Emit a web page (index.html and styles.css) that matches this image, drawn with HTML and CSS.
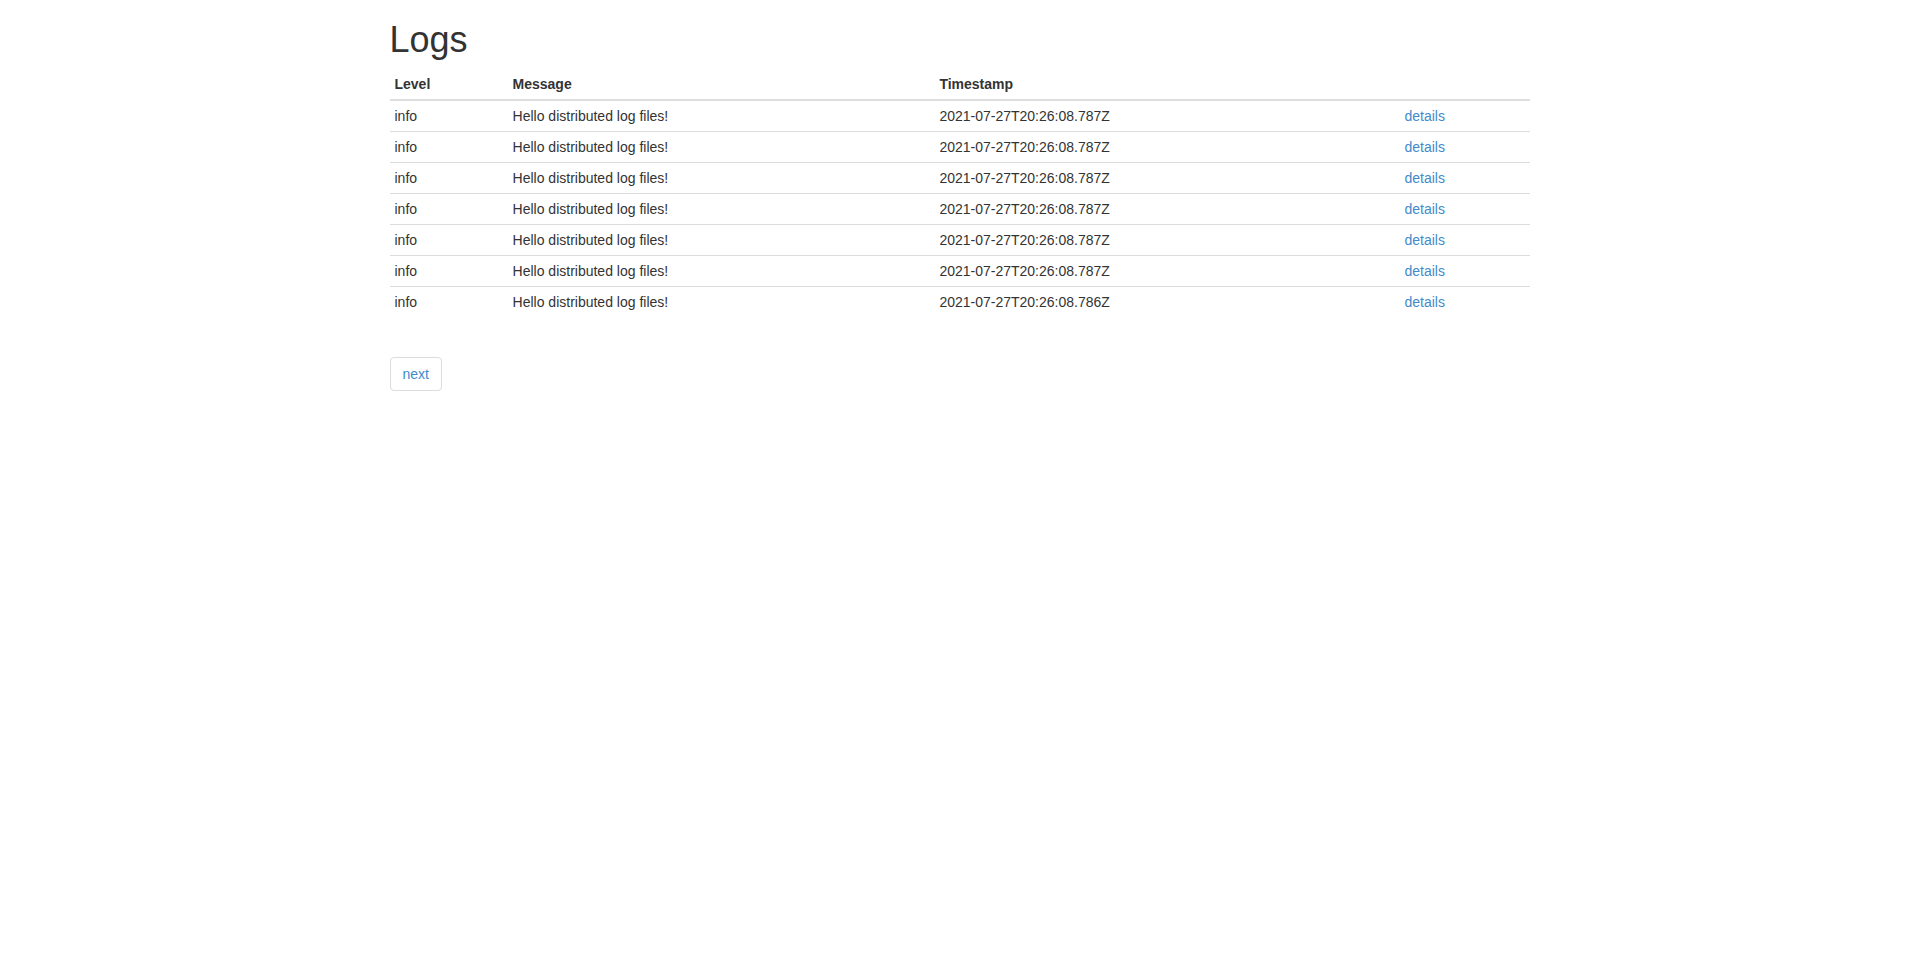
FILE: index.html
```html
<!DOCTYPE html>
<html>
<head>
<meta charset="utf-8">
<title>Logs</title>
<link rel="stylesheet" href="styles.css">
</head>
<body>
<div class="container">
  <h1 class="title">Logs</h1>
  <table class="table">
    <thead>
      <tr><th>Level</th><th>Message</th><th>Timestamp</th><th></th></tr>
    </thead>
    <tbody>
      <tr><td>info</td><td>Hello distributed log files!</td><td>2021-07-27T20:26:08.787Z</td><td><a href="#">details</a></td></tr>
      <tr><td>info</td><td>Hello distributed log files!</td><td>2021-07-27T20:26:08.787Z</td><td><a href="#">details</a></td></tr>
      <tr><td>info</td><td>Hello distributed log files!</td><td>2021-07-27T20:26:08.787Z</td><td><a href="#">details</a></td></tr>
      <tr><td>info</td><td>Hello distributed log files!</td><td>2021-07-27T20:26:08.787Z</td><td><a href="#">details</a></td></tr>
      <tr><td>info</td><td>Hello distributed log files!</td><td>2021-07-27T20:26:08.787Z</td><td><a href="#">details</a></td></tr>
      <tr><td>info</td><td>Hello distributed log files!</td><td>2021-07-27T20:26:08.787Z</td><td><a href="#">details</a></td></tr>
      <tr><td>info</td><td>Hello distributed log files!</td><td>2021-07-27T20:26:08.786Z</td><td><a href="#">details</a></td></tr>
    </tbody>
  </table>
  <nav>
    <ul class="pagination">
      <li><a href="#">next</a></li>
    </ul>
  </nav>
</div>
</body>
</html>
```
FILE: styles.css
```css
* { box-sizing: border-box; }
html, body { margin: 0; padding: 0; }
body {
  font-family: "Liberation Sans", Arial, Helvetica, sans-serif;
  font-size: 14px;
  line-height: 1.42857143;
  color: #333;
  background: #fff;
}
a { color: #428bca; text-decoration: none; }
.container {
  width: 1170px;
  margin: 0 auto;
  padding: 0 15px;
}
.title {
  font-size: 36px;
  font-weight: 500;
  line-height: 1.1;
  margin: 20px 0 9px;
}
.table {
  width: 100%;
  border-collapse: collapse;
  border-spacing: 0;
  margin-bottom: 20px;
}
.table th, .table td {
  padding: 5px;
  line-height: 1.42857143;
  vertical-align: top;
  text-align: left;
  border-top: 1px solid #ddd;
}
.table thead th {
  vertical-align: bottom;
  border-top: 0;
  border-bottom: 2px solid #ddd;
  font-weight: bold;
}
.table tbody tr:first-child td { border-top: 0; }
.pagination {
  display: inline-block;
  padding-left: 0;
  margin: 20px 0;
  list-style: none;
}
.pagination li { display: inline; }
.pagination li a {
  float: left;
  padding: 6px 12px;
  line-height: 1.42857143;
  border: 1px solid #ddd;
  border-radius: 4px;
  background: #fff;
  color: #428bca;
}
```
